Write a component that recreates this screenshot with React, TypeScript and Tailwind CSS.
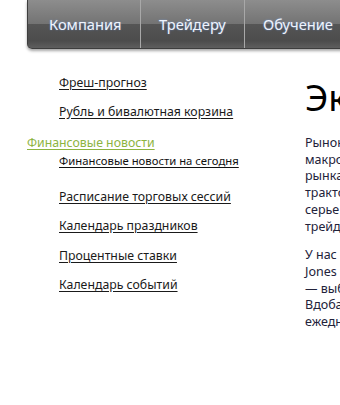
import React from 'react';

const LINKS_TOP = ['Фреш-прогноз', 'Рубль и бивалютная корзина'];
const LINKS_BOTTOM = ['Расписание торговых сессий', 'Календарь праздников', 'Процентные ставки', 'Календарь событий'];
const MENU = ['Компания', 'Трейдеру', 'Обучение'];

export default function App() {
  return (
    <div className="w-[340px] h-[405px] overflow-hidden bg-white font-['Noto_Sans',sans-serif]">
      {/* top menu */}
      <div className="ml-[27px] w-[360px] h-[49px] flex rounded-b-[5px] border border-t-0 border-[#3e3e3e] shadow-[0_2px_3px_rgba(0,0,0,0.35)] bg-[linear-gradient(to_bottom,#8d8d8d_0%,#737373_50%,#555555_51%,#4c4c4c_85%,#5e5e5e_100%)]">
        {MENU.map((item, i) => (
          <div
            key={item}
            className={`h-full flex items-center ${i === 0 ? 'w-[113px] pl-[21px]' : 'w-[104px] pl-[18px]'} ${i < MENU.length - 1 ? 'border-r border-[#a8a8a8]' : ''}`}
          >
            <span className="text-[14.7px] text-[#eef3fc] [text-shadow:0_0_2px_rgba(120,170,255,0.6)]">{item}</span>
          </div>
        ))}
      </div>

      <div className="flex">
        {/* side menu */}
        <div className="w-[278px] shrink-0 pt-[25.5px] text-[12.3px] leading-[16px]">
          <div className="flex flex-col gap-[13px] pl-[59px]">
            {LINKS_TOP.map((l) => (
              <a key={l} className="underline text-[#1a1a1a] underline-offset-2">{l}</a>
            ))}
          </div>
          <div className="mt-[15px] pl-[27px] text-[#8db43f] underline underline-offset-2">Финансовые новости</div>
          <div className="mt-[2px] pl-[59px] text-[11.3px] underline text-[#111] underline-offset-2">Финансовые новости на сегодня</div>
          <div className="mt-[20px] flex flex-col gap-[13.5px] pl-[59px]">
            {LINKS_BOTTOM.map((l) => (
              <a key={l} className="underline text-[#1a1a1a] underline-offset-2">{l}</a>
            ))}
          </div>
        </div>

        {/* content */}
        <div className="pl-[27px] pt-[27px] whitespace-nowrap text-[#22223a]">
          <h1 className="text-[36px] leading-[44px] text-black">Экономический календарь</h1>
          <p className="mt-[15px] text-[12.5px] leading-[16.7px]">
            Рынок<br />макро<br />рынка<br />тракто<br />серье<br />трейде
          </p>
          <p className="mt-[12px] text-[12.5px] leading-[16.7px]">
            У нас есть<br />Jones<br />— выбор<br />Вдобавок<br />ежедневно
          </p>
        </div>
      </div>
    </div>
  );
}
